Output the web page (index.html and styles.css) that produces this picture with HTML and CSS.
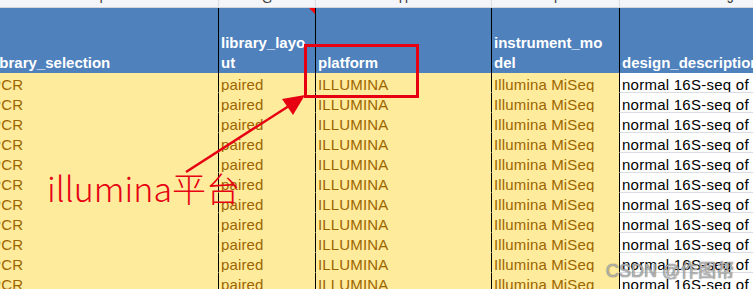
FILE: index.html
```html
<!DOCTYPE html>
<html lang="zh">
<head>
<meta charset="utf-8">
<title>Sheet</title>
<link rel="stylesheet" href="styles.css">
</head>
<body>
<div class="sheet">
  <div class="grid">
    <div class="letter"><span>F</span></div>
    <div class="letter"><span>G</span></div>
    <div class="letter"><span>H</span></div>
    <div class="letter"><span>I</span></div>
    <div class="letter"><span>J</span></div>

    <div class="hd"><span>library_selection</span></div>
    <div class="hd"><span>library_layo<br>ut</span></div>
    <div class="hd"><span>platform</span></div>
    <div class="hd"><span>instrument_mo<br>del</span></div>
    <div class="hd"><span>design_description</span></div>

    <div class="c y">PCR</div><div class="c y">paired</div><div class="c y">ILLUMINA</div><div class="c y">Illumina MiSeq</div><div class="c w">normal 16S-seq of mouse gut</div>
    <div class="c y">PCR</div><div class="c y">paired</div><div class="c y">ILLUMINA</div><div class="c y">Illumina MiSeq</div><div class="c w">normal 16S-seq of mouse gut</div>
    <div class="c y">PCR</div><div class="c y">paired</div><div class="c y">ILLUMINA</div><div class="c y">Illumina MiSeq</div><div class="c w">normal 16S-seq of mouse gut</div>
    <div class="c y">PCR</div><div class="c y">paired</div><div class="c y">ILLUMINA</div><div class="c y">Illumina MiSeq</div><div class="c w">normal 16S-seq of mouse gut</div>
    <div class="c y">PCR</div><div class="c y">paired</div><div class="c y">ILLUMINA</div><div class="c y">Illumina MiSeq</div><div class="c w">normal 16S-seq of mouse gut</div>
    <div class="c y">PCR</div><div class="c y">paired</div><div class="c y">ILLUMINA</div><div class="c y">Illumina MiSeq</div><div class="c w">normal 16S-seq of mouse gut</div>
    <div class="c y">PCR</div><div class="c y">paired</div><div class="c y">ILLUMINA</div><div class="c y">Illumina MiSeq</div><div class="c w">normal 16S-seq of mouse gut</div>
    <div class="c y">PCR</div><div class="c y">paired</div><div class="c y">ILLUMINA</div><div class="c y">Illumina MiSeq</div><div class="c w">normal 16S-seq of mouse gut</div>
    <div class="c y">PCR</div><div class="c y">paired</div><div class="c y">ILLUMINA</div><div class="c y">Illumina MiSeq</div><div class="c w">normal 16S-seq of mouse gut</div>
    <div class="c y">PCR</div><div class="c y">paired</div><div class="c y">ILLUMINA</div><div class="c y">Illumina MiSeq</div><div class="c w">normal 16S-seq of mouse gut</div>
    <div class="c y">PCR</div><div class="c y">paired</div><div class="c y">ILLUMINA</div><div class="c y">Illumina MiSeq</div><div class="c w">normal 16S-seq of mouse gut</div>
  </div>

  <div class="comment-mark"></div>

  <svg class="marks" width="753" height="289" viewBox="0 0 753 289" xmlns="http://www.w3.org/2000/svg">
    <rect x="305.5" y="45.5" width="112" height="51" fill="none" stroke="#e60012" stroke-width="3"/>
    <line x1="186" y1="172" x2="292" y2="104" stroke="#e60012" stroke-width="2.5"/>
    <polygon points="305,95 282,99 293,115" fill="#e60012"/>
  </svg>

  <div class="note">illumina平台</div>
  <div class="watermark">CSDN @作图帮</div>
</div>
</body>
</html>
```

FILE: styles.css
```css
html, body {
  margin: 0;
  padding: 0;
  background: #ffffff;
}
body {
  width: 753px;
  height: 289px;
  overflow: hidden;
  font-family: "Liberation Sans", Arial, sans-serif;
}
.sheet {
  position: relative;
  width: 753px;
  height: 289px;
  overflow: hidden;
}
.grid {
  display: grid;
  grid-template-columns: 230px 97px 176px 128px 222px;
  grid-template-rows: 8px 65px repeat(11, 20px);
  margin-left: -12px;
  width: 853px;
}
.grid > div {
  box-sizing: border-box;
  border-left: 1px solid #000;
  overflow: hidden;
  white-space: nowrap;
}
.grid > .letter {
  background: #f4f5f8;
  border-left: 1px solid #d9dce1;
  border-bottom: 1px solid #d3d6db;
  display: flex;
  justify-content: center;
  font-size: 13px;
  line-height: 13px;
  color: #3c3c3c;
}
.letter span {
  margin-top: -8px;
}
.hd {
  background: #4f81bd;
  color: #ffffff;
  font-weight: bold;
  font-size: 15px;
  line-height: 20px;
  padding-left: 2px;
  display: flex;
  align-items: flex-end;
}
.c {
  font-size: 15px;
  line-height: 15px;
  padding: 4px 0 0 2px;
  letter-spacing: 0.15px;
}
.c.y {
  background: #ffeb9c;
  color: #9c6500;
  border-bottom: 1px solid #ffeb9c;
}
.c.w {
  background: #ffffff;
  color: #000000;
  border-bottom: 1px solid #d9dde3;
  letter-spacing: 0.25px;
}
.comment-mark {
  position: absolute;
  left: 309px;
  top: 8px;
  width: 0;
  height: 0;
  border-top: 6px solid #ff0000;
  border-left: 6px solid transparent;
}
.marks {
  position: absolute;
  left: 0;
  top: 0;
  pointer-events: none;
}
.note {
  position: absolute;
  left: 47px;
  top: 171px;
  font-family: "Noto Sans CJK SC", "Noto Sans", sans-serif;
  font-weight: 300;
  font-size: 34px;
  line-height: 34px;
  color: #e60012;
  white-space: nowrap;
}
.watermark {
  position: absolute;
  left: 606px;
  top: 261px;
  font-family: "Liberation Sans", "Noto Sans CJK SC", sans-serif;
  font-size: 18px;
  line-height: 20px;
  color: rgba(255, 255, 255, 0.55);
  text-shadow: 0 0 1px rgba(60, 60, 60, 0.8), 0 0 1px rgba(60, 60, 60, 0.6);
  white-space: nowrap;
}
```
